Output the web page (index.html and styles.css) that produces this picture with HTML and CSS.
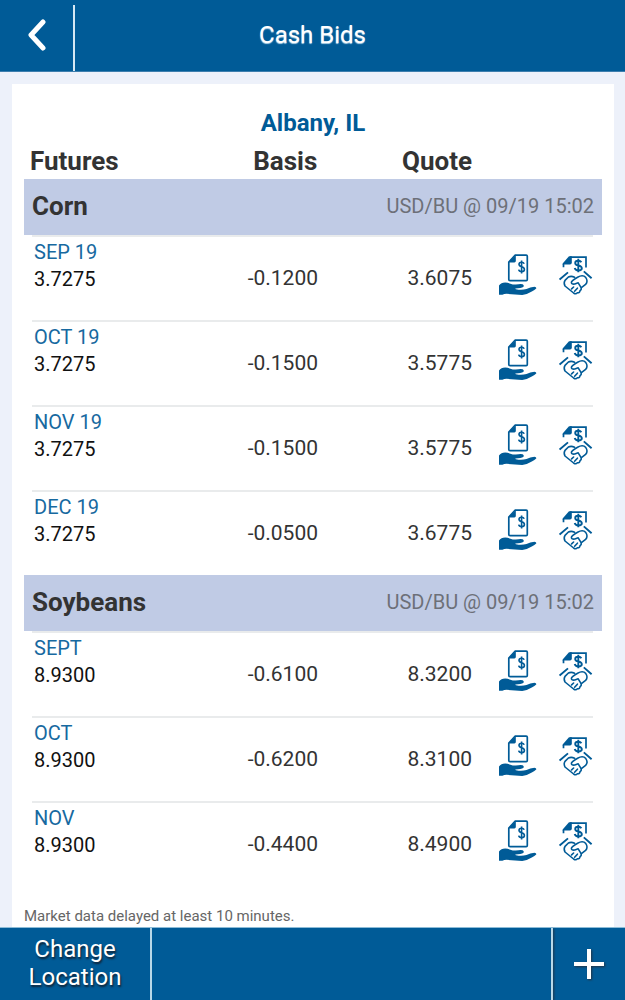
FILE: index.html
```html
<!DOCTYPE html>
<html lang="en">
<head>
  <meta charset="utf-8">
  <meta name="viewport" content="width=device-width, initial-scale=1">
  <title>Cash Bids</title>
  <link rel="stylesheet" href="styles.css">
</head>
<body>
  <!-- Shared icons -->
  <svg class="icon-defs" aria-hidden="true">
    <symbol id="icon-offer" viewBox="0 0 38 42">
      <path d="M16 1.2H27.2Q28.3 1.2 28.3 2.3V25.5Q28.3 26.6 27.2 26.6H11Q9.8 26.6 9.8 25.5V8Z" fill="none" stroke="currentColor" stroke-width="1.7" stroke-linejoin="round"/>
      <path d="M16.8 1V7Q16.8 8.4 15.4 8.4H9.2Z" fill="currentColor"/>
      <path d="M25.2 9.7Q24.6 8.2 22.5 8.2Q20 8.2 20 10.3Q20 12 22.6 12.7Q25.4 13.4 25.4 15.4Q25.4 17.6 22.7 17.6Q20.2 17.6 19.7 15.6M22.6 6.4V19.4" fill="none" stroke="currentColor" stroke-width="1.6"/>
      <path d="M0 31.6Q2 28.6 6.2 28.6Q9.4 28.8 12.2 30Q14.2 30.8 16.8 30.5Q21.6 29.6 23.6 30.2Q25.6 31.2 24.2 33Q22.4 34.2 16.5 34.4Q16 34.8 17 35.2Q22.8 36.4 27.5 34.9Q31.2 33 35.4 32.7Q37.8 33 37.2 34.5Q35.8 35.9 32.8 37.4Q28 40.4 23.2 41L7.5 39.8Q5.2 39.8 3.4 40.8H0Z" fill="currentColor"/>
    </symbol>
    <symbol id="icon-deal" viewBox="0 0 34 42">
      <path d="M11 3.1H27V13.6M4.5 10V13.2" fill="none" stroke="currentColor" stroke-width="1.7"/>
      <path d="M10 2.2H12.8V8.8Q12.8 10.6 11 10.6H3.6V9.4Z" fill="currentColor"/>
      <path d="M22.4 8.3Q21.6 6.8 19.2 6.8Q16.2 6.8 16.2 9Q16.2 10.9 19.3 11.4Q22.8 12.2 22.8 14.2Q22.8 16.4 19.4 16.4Q16.3 16.4 15.7 14M19.3 4.8V18.2" fill="none" stroke="currentColor" stroke-width="1.9"/>
      <path d="M.6 25.6L9 18.4M24.8 17.4L32.6 24.2" fill="none" stroke="currentColor" stroke-width="1.9"/>
      <path d="M15.6 23.2Q12.2 21.6 9.4 23L6 26.4Q4.4 29 6 32L14.6 39Q16.8 40.6 18.4 38.8Q20.8 39 21 36.6Q23 35.6 21.8 33.2L19.2 28.8L15.8 30Q12.4 30.6 12.4 28.2Q12.6 26.6 18.6 23.2Q24 20.2 26.8 23.6Q29.4 27.4 26.6 30.4L22.4 33.6M15.6 37.2L18.4 34.2M12.6 34.9L14.6 33" fill="none" stroke="currentColor" stroke-width="1.6" stroke-linecap="round" stroke-linejoin="round"/>
    </symbol>
  </svg>

  <header class="top-bar">
    <button class="back-button" aria-label="Back">
      <svg width="20" height="32" viewBox="0 0 20 32"><path d="M16 3L4 16L16 29" fill="none" stroke="currentColor" stroke-width="5" stroke-linecap="round" stroke-linejoin="round"/></svg>
    </button>
    <h1 class="page-title">Cash Bids</h1>
  </header>

  <main class="card">
    <h2 class="location">Albany, IL</h2>

    <table class="bids">
      <thead>
        <tr class="bid-columns column-heads">
          <th>Futures</th>
          <th>Basis</th>
          <th>Quote</th>
        </tr>
      </thead>

      <!-- Corn -->
      <tbody>
        <tr class="commodity">
          <th>Corn</th>
          <td>USD/BU @ 09/19 15:02</td>
        </tr>
        <tr class="bid-columns bid">
          <td class="futures"><span class="month">SEP 19</span>3.7275</td>
          <td>-0.1200</td>
          <td>3.6075</td>
          <td><button class="icon-button" aria-label="Make offer"><svg width="38" height="42"><use href="#icon-offer"/></svg></button></td>
          <td><button class="icon-button" aria-label="Accept bid"><svg width="34" height="42"><use href="#icon-deal"/></svg></button></td>
        </tr>
        <tr class="bid-columns bid">
          <td class="futures"><span class="month">OCT 19</span>3.7275</td>
          <td>-0.1500</td>
          <td>3.5775</td>
          <td><button class="icon-button" aria-label="Make offer"><svg width="38" height="42"><use href="#icon-offer"/></svg></button></td>
          <td><button class="icon-button" aria-label="Accept bid"><svg width="34" height="42"><use href="#icon-deal"/></svg></button></td>
        </tr>
        <tr class="bid-columns bid">
          <td class="futures"><span class="month">NOV 19</span>3.7275</td>
          <td>-0.1500</td>
          <td>3.5775</td>
          <td><button class="icon-button" aria-label="Make offer"><svg width="38" height="42"><use href="#icon-offer"/></svg></button></td>
          <td><button class="icon-button" aria-label="Accept bid"><svg width="34" height="42"><use href="#icon-deal"/></svg></button></td>
        </tr>
        <tr class="bid-columns bid">
          <td class="futures"><span class="month">DEC 19</span>3.7275</td>
          <td>-0.0500</td>
          <td>3.6775</td>
          <td><button class="icon-button" aria-label="Make offer"><svg width="38" height="42"><use href="#icon-offer"/></svg></button></td>
          <td><button class="icon-button" aria-label="Accept bid"><svg width="34" height="42"><use href="#icon-deal"/></svg></button></td>
        </tr>
      </tbody>

      <!-- Soybeans -->
      <tbody>
        <tr class="commodity">
          <th>Soybeans</th>
          <td>USD/BU @ 09/19 15:02</td>
        </tr>
        <tr class="bid-columns bid">
          <td class="futures"><span class="month">SEPT</span>8.9300</td>
          <td>-0.6100</td>
          <td>8.3200</td>
          <td><button class="icon-button" aria-label="Make offer"><svg width="38" height="42"><use href="#icon-offer"/></svg></button></td>
          <td><button class="icon-button" aria-label="Accept bid"><svg width="34" height="42"><use href="#icon-deal"/></svg></button></td>
        </tr>
        <tr class="bid-columns bid">
          <td class="futures"><span class="month">OCT</span>8.9300</td>
          <td>-0.6200</td>
          <td>8.3100</td>
          <td><button class="icon-button" aria-label="Make offer"><svg width="38" height="42"><use href="#icon-offer"/></svg></button></td>
          <td><button class="icon-button" aria-label="Accept bid"><svg width="34" height="42"><use href="#icon-deal"/></svg></button></td>
        </tr>
        <tr class="bid-columns bid">
          <td class="futures"><span class="month">NOV</span>8.9300</td>
          <td>-0.4400</td>
          <td>8.4900</td>
          <td><button class="icon-button" aria-label="Make offer"><svg width="38" height="42"><use href="#icon-offer"/></svg></button></td>
          <td><button class="icon-button" aria-label="Accept bid"><svg width="34" height="42"><use href="#icon-deal"/></svg></button></td>
        </tr>
      </tbody>
    </table>

    <p class="disclaimer">Market data delayed at least 10 minutes.</p>
  </main>

  <footer class="bottom-bar">
    <button class="change-location">Change Location</button>
    <button class="add-button" aria-label="Add">
      <svg width="32" height="32" viewBox="0 0 32 32"><path d="M16 1V31M1 16H31" fill="none" stroke="currentColor" stroke-width="4"/></svg>
    </button>
  </footer>
</body>
</html>
```
FILE: styles.css
```css
* {
  box-sizing: border-box;
}

body {
  display: flex;
  flex-direction: column;
  min-height: 100vh;
  margin: 0;
  background: #edf1fa;
  color: #333;
  font-family: Roboto, "Liberation Sans", sans-serif;
}

button {
  padding: 0;
  border: 0;
  background: none;
  color: inherit;
  font: inherit;
  cursor: pointer;
}

svg {
  display: block;
}

.icon-defs {
  position: absolute;
  width: 0;
  height: 0;
}

/* Top bar */
.top-bar {
  display: grid;
  grid-template-columns: 75px 1fr 75px;
  height: 72px;
  padding-top: 5px;
  border-bottom: 1px solid #3d7eae;
  background: #005b97;
  color: #fff;
}

.back-button {
  display: flex;
  align-items: center;
  justify-content: center;
  padding-bottom: 6px;
  border-right: 2px solid #d5e8f4;
}

.page-title {
  margin: 0;
  padding-top: 16px;
  font-size: 24px;
  font-weight: 400;
  line-height: 28px;
  text-align: center;
  text-shadow: 0 1px 1px #b5d5e8;
}

/* Card */
.card {
  flex: 1;
  margin: 12px 11px 0 12px;
  padding: 25px 12px 0;
  background: #fff;
}

.location {
  margin: 0;
  color: #005b97;
  font-size: 24px;
  font-weight: 700;
  line-height: 28px;
  text-align: center;
}

/* Bids table */
.bids,
.bids thead,
.bids tbody {
  display: block;
}

.bids th,
.bids td {
  padding: 0;
}

.bid-columns {
  display: grid;
  grid-template-columns: 6fr 7fr 7fr 65px 56px;
  align-items: center;
  margin: 0 9px 0 8px;
  text-align: right;
}

.column-heads {
  margin-left: 6px;
  padding: 8px 0 2px;
  font-size: 26px;
  line-height: 32px;
}

.column-heads th:first-child {
  text-align: left;
}

.commodity {
  display: flex;
  align-items: center;
  justify-content: space-between;
  height: 56px;
  padding: 0 8px 2px;
  background: #c0cbe5;
}

.commodity th {
  font-size: 26px;
}

.commodity td {
  color: #6d7078;
  font-size: 20px;
}

.bid {
  height: 85px;
  padding-bottom: 2px;
  border-top: 2px solid #e9ebec;
  font-size: 21px;
}

.bid .futures {
  align-self: start;
  padding: 2px;
  color: #111;
  font-size: 20px;
  line-height: 27px;
  text-align: left;
}

.month {
  display: block;
  color: #1769a0;
}

.icon-button {
  display: block;
  margin-left: auto;
  padding-bottom: 6px;
  color: #005b97;
}

.disclaimer {
  margin: 20px 0 0;
  color: #666;
  font-size: 15px;
  line-height: 20px;
}

/* Bottom bar */
.bottom-bar {
  display: flex;
  justify-content: space-between;
  height: 73px;
  border-top: 1px solid #8dbcd7;
  background: #005b97;
  color: #fff;
}

.change-location {
  width: 152px;
  padding: 0 16px 2px;
  border-right: 2px solid #b8d8e8;
  font-size: 24px;
  line-height: 28px;
  text-shadow: 1px 2px 2px #123;
}

.add-button {
  display: flex;
  align-items: center;
  justify-content: center;
  width: 74px;
  border-left: 2px solid #b8d8e8;
  filter: drop-shadow(1px 1px 1px #234);
}
```
